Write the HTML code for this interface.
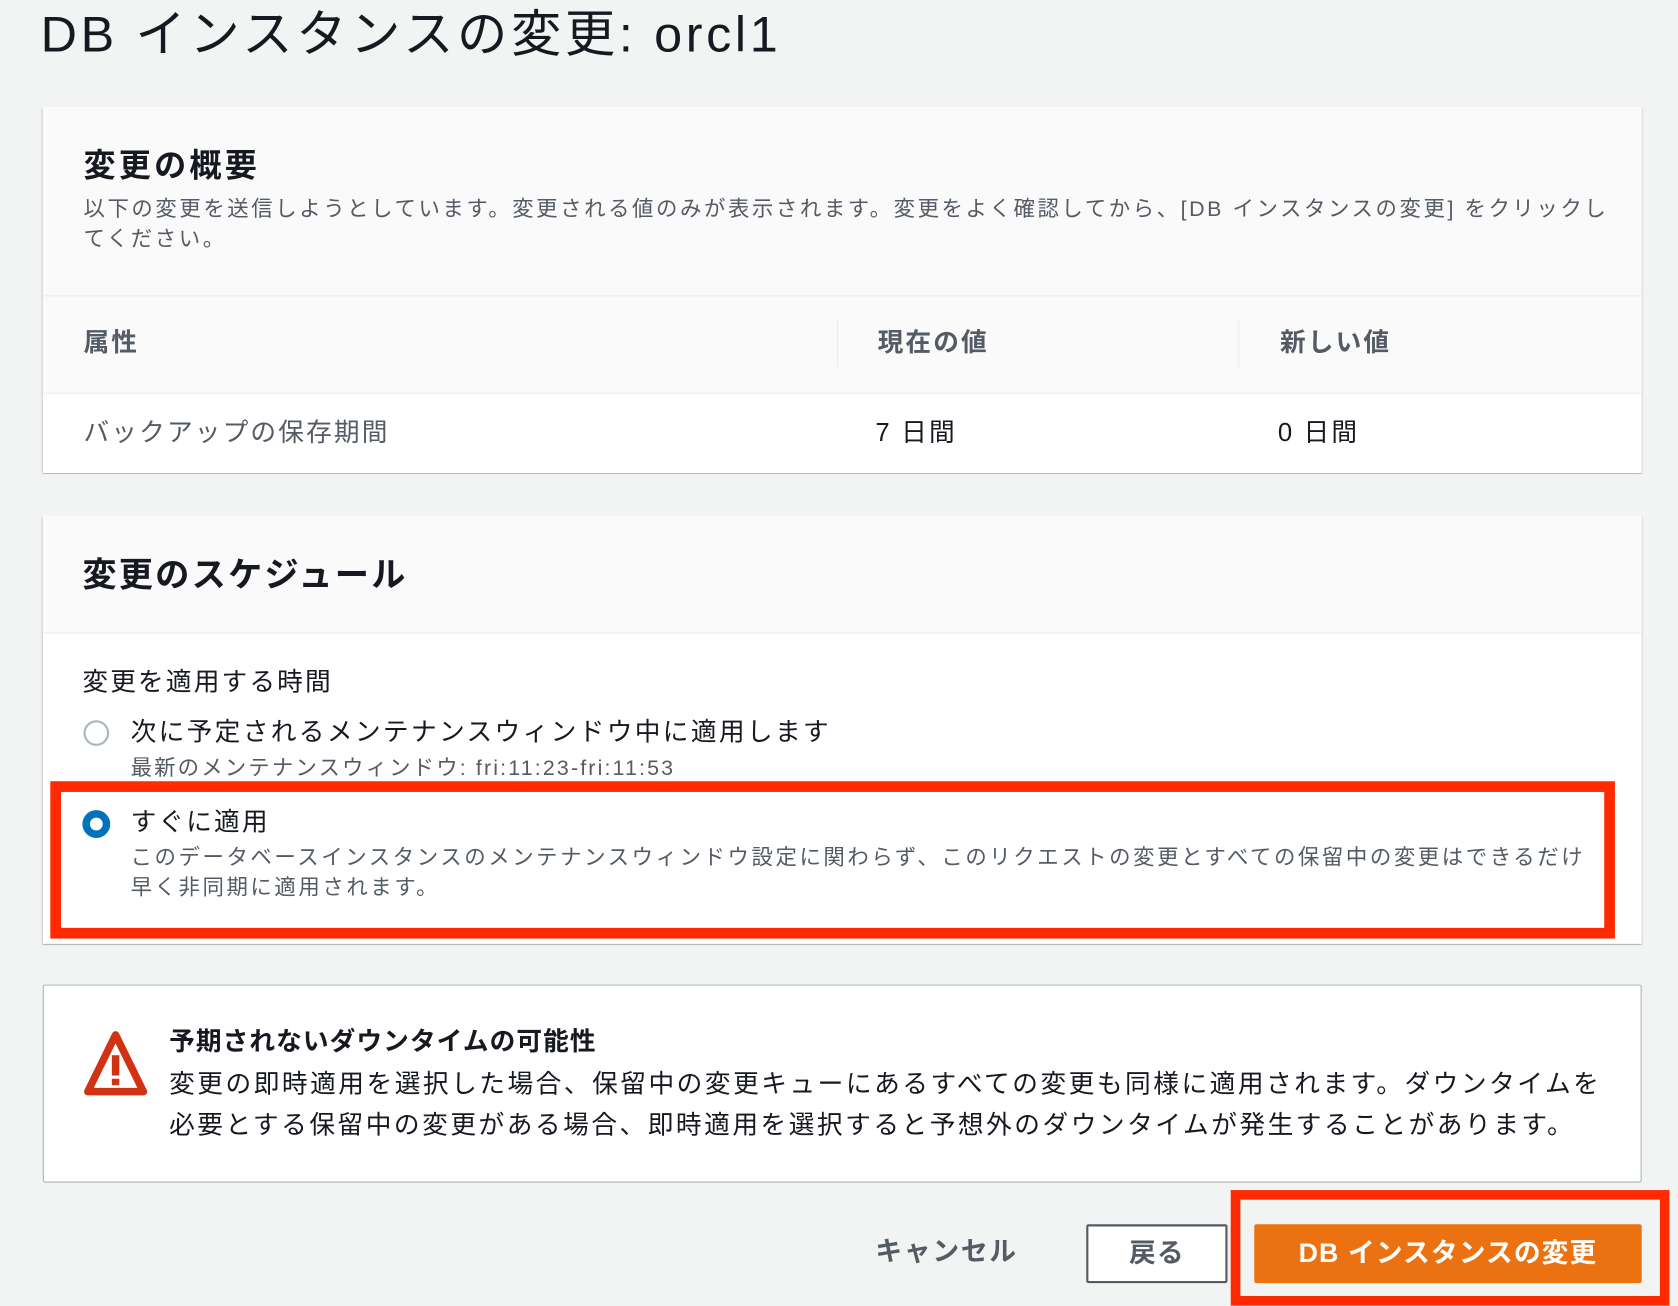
<!DOCTYPE html>
<html><head><meta charset="utf-8"><style>
html,body{margin:0;padding:0;background:#f2f3f3;width:1678px;height:1306px;overflow:hidden}
#w{position:absolute;left:0;top:0;width:1568px;height:1220px;transform:scale(1.0702);transform-origin:0 0;font-family:"Liberation Sans","Noto Sans CJK JP",sans-serif;color:#16191f}
.a{position:absolute;white-space:nowrap}
.card{position:absolute;left:40px;width:1494px;background:#fff;box-shadow:0 1px 1px rgba(0,28,36,.3),1px 1px 1px rgba(0,28,36,.15),-1px 1px 1px rgba(0,28,36,.15)}
.g{color:#545b64}
.s{letter-spacing:2.4px}
.m{letter-spacing:2px}
</style></head><body><div id="w">
<div class="a" style="left:38px;top:2px;font-size:47px;line-height:60px;letter-spacing:3.4px">DB インスタンスの変更: orcl1</div>

<div class="card" style="top:100px;height:342px">
 <div style="position:absolute;left:0;top:0;width:100%;height:267px;background:#fafafa;border-bottom:1px solid #eaeded"></div>
 <div class="a" style="left:38px;top:36px;font-size:30px;font-weight:bold;line-height:40px;letter-spacing:3px">変更の概要</div>
 <div class="a g s" style="left:38px;top:82px;font-size:20px;line-height:28px;white-space:normal;width:1430px">以下の変更を送信しようとしています。変更される値のみが表示されます。変更をよく確認してから、[DB インスタンスの変更] をクリックしてください。</div>
 <div style="position:absolute;left:0;top:176px;width:100%;height:1px;background:#eaeded"></div>
 <div style="position:absolute;left:742px;top:198px;width:1px;height:45px;background:#eaeded"></div>
 <div style="position:absolute;left:1117px;top:198px;width:1px;height:45px;background:#eaeded"></div>
 <div class="a g m" style="left:38px;top:204px;font-size:24px;font-weight:bold;line-height:34px">属性</div>
 <div class="a g m" style="left:780px;top:204px;font-size:24px;font-weight:bold;line-height:34px">現在の値</div>
 <div class="a g m" style="left:1156px;top:204px;font-size:24px;font-weight:bold;line-height:34px">新しい値</div>
 <div class="a g m" style="left:38px;top:288px;font-size:24px;line-height:34px">バックアップの保存期間</div>
 <div class="a m" style="left:778px;top:288px;font-size:24px;line-height:34px">7 日間</div>
 <div class="a m" style="left:1154px;top:288px;font-size:24px;line-height:34px">0 日間</div>
</div>

<div class="card" style="top:482px;height:400px">
 <div style="position:absolute;left:0;top:0;width:100%;height:109px;background:#fafafa;border-bottom:1px solid #eaeded"></div>
 <div class="a" style="left:37px;top:34px;font-size:32px;font-weight:bold;line-height:42px;letter-spacing:2px">変更のスケジュール</div>
 <div class="a m" style="left:37px;top:139px;font-size:24px;line-height:34px">変更を適用する時間</div>
 <div style="position:absolute;left:38px;top:191px;width:24px;height:24px;border:2px solid #aab7b8;border-radius:50%;box-sizing:border-box"></div>
 <div class="a" style="left:82px;top:186px;font-size:24px;line-height:34px;letter-spacing:2.2px">次に予定されるメンテナンスウィンドウ中に適用します</div>
 <div class="a g" style="left:82px;top:222px;font-size:20px;line-height:28px;letter-spacing:2px">最新のメンテナンスウィンドウ: fri:11:23-fri:11:53</div>
 <div style="position:absolute;left:37px;top:275px;width:26px;height:26px;border:7px solid #0073bb;border-radius:50%;box-sizing:border-box;background:#fff"></div>
 <div class="a m" style="left:82px;top:270px;font-size:24px;line-height:34px">すぐに適用</div>
 <div class="a g s" style="left:82px;top:306px;font-size:20px;line-height:28px;white-space:normal;width:1365px">このデータベースインスタンスのメンテナンスウィンドウ設定に関わらず、このリクエストの変更とすべての保留中の変更はできるだけ早く非同期に適用されます。</div>
</div>
<div style="position:absolute;left:47px;top:730px;width:1462px;height:147px;border:10px solid #ff2a00;box-sizing:border-box"></div>

<div style="position:absolute;left:40px;top:920px;width:1494px;height:185px;background:#fff;border:1px solid #aab7b8;border-radius:2px;box-sizing:border-box"></div>
<svg style="position:absolute;left:77px;top:962px" width="62" height="64" viewBox="0 0 62 64"><path d="M31 5 L57 58 L5 58 Z" fill="none" stroke="#d13212" stroke-width="7" stroke-linejoin="round"/><rect x="27.5" y="24" width="7" height="19" fill="#d13212"/><rect x="27.5" y="46" width="7" height="6" fill="#d13212"/></svg>
<div class="a" style="left:158px;top:957px;font-size:24px;font-weight:bold;line-height:34px;letter-spacing:1px">予期されないダウンタイムの可能性</div>
<div class="a" style="left:158px;top:995px;font-size:24px;line-height:38px;white-space:normal;width:1340px;letter-spacing:2.35px">変更の即時適用を選択した場合、保留中の変更キューにあるすべての変更も同様に適用されます。ダウンタイムを必要とする保留中の変更がある場合、即時適用を選択すると予想外のダウンタイムが発生することがあります。</div>

<div class="a g" style="left:818px;top:1153px;font-size:25px;font-weight:bold;line-height:34px;letter-spacing:1.6px">キャンセル</div>
<div style="position:absolute;left:1015px;top:1144px;width:132px;height:55px;border:2px solid #545b64;box-sizing:border-box;background:#fff;border-radius:2px;text-align:center;font-size:25px;font-weight:bold;line-height:51px;color:#545b64;letter-spacing:1px">戻る</div>
<div style="position:absolute;left:1172px;top:1144px;width:362px;height:55px;background:#ec7211;border-radius:2px;text-align:center;font-size:25px;font-weight:bold;line-height:55px;color:#fff;letter-spacing:1px">DB インスタンスの変更</div>
<div style="position:absolute;left:1150px;top:1112px;width:410px;height:108px;border:9px solid #ff2a00;box-sizing:border-box"></div>
</div></body></html>
